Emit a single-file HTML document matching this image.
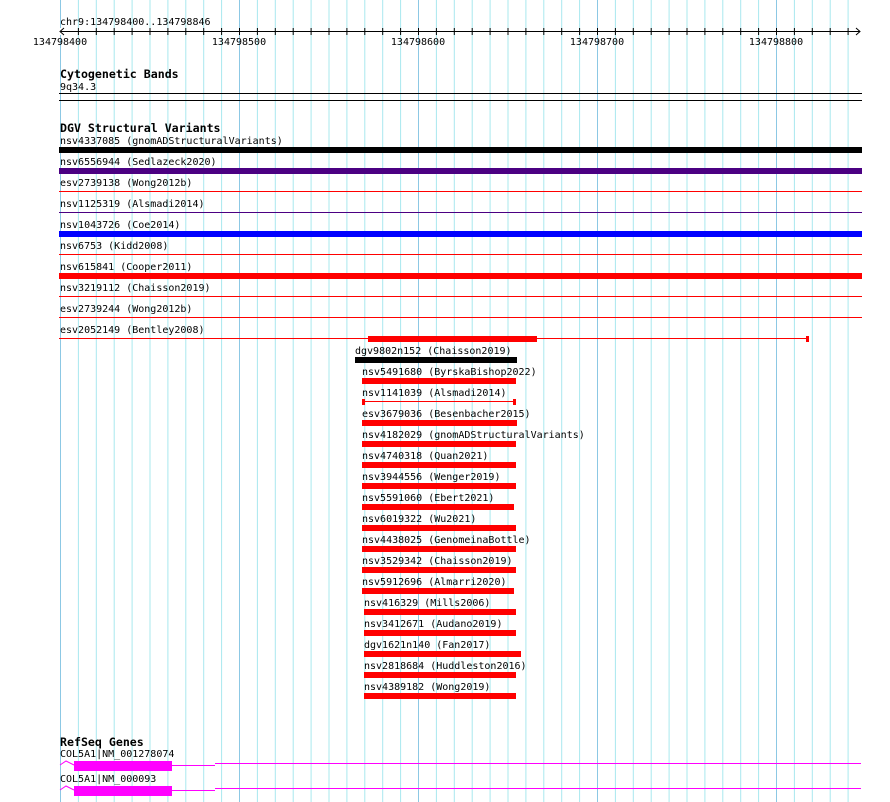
<!DOCTYPE html>
<html><head><meta charset="utf-8"><style>
html,body{margin:0;padding:0;background:#fff;width:890px;height:802px;overflow:hidden}
svg{display:block}
text{font-family:"DejaVu Sans Mono","Liberation Mono",monospace;font-size:10px;fill:#000}
.t{font-weight:bold;font-size:11.6px}
</style></head><body>
<svg width="890" height="802" viewBox="0 0 890 802" shape-rendering="crispEdges">
<defs>
<pattern id="g" x="60" y="0" width="17.9" height="802" patternUnits="userSpaceOnUse">
<rect x="0" y="0" width="1" height="802" fill="#a8e8ee"/>
</pattern>
<pattern id="tk" x="60" y="28" width="17.9" height="7" patternUnits="userSpaceOnUse">
<rect x="0" y="0" width="1" height="7" fill="#000"/>
</pattern>
</defs>
<rect x="0" y="0" width="890" height="802" fill="#fff"/>
<rect x="60" y="0" width="800" height="802" fill="url(#g)"/>
<g fill="#8cc8e4">
<rect x="60" y="0" width="1" height="802"/><rect x="239" y="0" width="1" height="802"/><rect x="418" y="0" width="1" height="802"/><rect x="597" y="0" width="1" height="802"/><rect x="776" y="0" width="1" height="802"/>
</g>
<text x="60" y="25">chr9:134798400..134798846</text>
<rect x="60" y="31" width="800" height="1" fill="#000"/>
<rect x="61" y="28" width="800" height="7" fill="url(#tk)"/>
<rect x="60" y="28" width="1" height="7" fill="#fff"/>
<path d="M64 28 L60 31.5 L64 35 M856 28 L860 31.5 L856 35" stroke="#000" fill="none" stroke-width="1" shape-rendering="auto"/>
<text x="60" y="45" text-anchor="middle">134798400</text>
<text x="239" y="45" text-anchor="middle">134798500</text>
<text x="418" y="45" text-anchor="middle">134798600</text>
<text x="597" y="45" text-anchor="middle">134798700</text>
<text x="776" y="45" text-anchor="middle">134798800</text>
<text class="t" x="60" y="78">Cytogenetic Bands</text>
<text x="60" y="90">9q34.3</text>
<rect x="59" y="93" width="803" height="1" fill="#000"/>
<rect x="59" y="100" width="803" height="1" fill="#000"/>
<text class="t" x="60" y="132">DGV Structural Variants</text>
<text x="60" y="144">nsv4337085 (gnomADStructuralVariants)</text>
<rect x="59" y="147" width="803" height="6" fill="#000"/>
<text x="60" y="165">nsv6556944 (Sedlazeck2020)</text>
<rect x="59" y="168" width="803" height="6" fill="#4b0082"/>
<text x="60" y="186">esv2739138 (Wong2012b)</text>
<rect x="59" y="191" width="803" height="1" fill="#f00"/>
<text x="60" y="207">nsv1125319 (Alsmadi2014)</text>
<rect x="59" y="212" width="803" height="1" fill="#4b0082"/>
<text x="60" y="228">nsv1043726 (Coe2014)</text>
<rect x="59" y="231" width="803" height="6" fill="#00f"/>
<text x="60" y="249">nsv6753 (Kidd2008)</text>
<rect x="59" y="254" width="803" height="1" fill="#f00"/>
<text x="60" y="270">nsv615841 (Cooper2011)</text>
<rect x="59" y="273" width="803" height="6" fill="#f00"/>
<text x="60" y="291">nsv3219112 (Chaisson2019)</text>
<rect x="59" y="296" width="803" height="1" fill="#f00"/>
<text x="60" y="312">esv2739244 (Wong2012b)</text>
<rect x="59" y="317" width="803" height="1" fill="#f00"/>
<text x="60" y="333">esv2052149 (Bentley2008)</text>
<rect x="59" y="338" width="749" height="1" fill="#f00"/>
<rect x="368" y="336" width="169" height="6" fill="#f00"/>
<rect x="806" y="336" width="3" height="6" fill="#f00"/>
<text x="355" y="354">dgv9802n152 (Chaisson2019)</text>
<rect x="355" y="357" width="162" height="6" fill="#000"/>
<g fill="#f00">
<rect x="362" y="378" width="154" height="6"/>
<rect x="362" y="401" width="153" height="1"/><rect x="362" y="399" width="3" height="6"/><rect x="513" y="399" width="3" height="6"/>
<rect x="362" y="420" width="155" height="6"/>
<rect x="362" y="441" width="154" height="6"/>
<rect x="362" y="462" width="154" height="6"/>
<rect x="362" y="483" width="154" height="6"/>
<rect x="362" y="504" width="152" height="6"/>
<rect x="362" y="525" width="154" height="6"/>
<rect x="362" y="546" width="154" height="6"/>
<rect x="362" y="567" width="154" height="6"/>
<rect x="362" y="588" width="152" height="6"/>
<rect x="364" y="609" width="152" height="6"/>
<rect x="364" y="630" width="152" height="6"/>
<rect x="364" y="651" width="157" height="6"/>
<rect x="364" y="672" width="152" height="6"/>
<rect x="364" y="693" width="152" height="6"/>
</g>
<text x="362" y="375">nsv5491680 (ByrskaBishop2022)</text>
<text x="362" y="396">nsv1141039 (Alsmadi2014)</text>
<text x="362" y="417">esv3679036 (Besenbacher2015)</text>
<text x="362" y="438">nsv4182029 (gnomADStructuralVariants)</text>
<text x="362" y="459">nsv4740318 (Quan2021)</text>
<text x="362" y="480">nsv3944556 (Wenger2019)</text>
<text x="362" y="501">nsv5591060 (Ebert2021)</text>
<text x="362" y="522">nsv6019322 (Wu2021)</text>
<text x="362" y="543">nsv4438025 (GenomeinaBottle)</text>
<text x="362" y="564">nsv3529342 (Chaisson2019)</text>
<text x="362" y="585">nsv5912696 (Almarri2020)</text>
<text x="364" y="606">nsv416329 (Mills2006)</text>
<text x="364" y="627">nsv3412671 (Audano2019)</text>
<text x="364" y="648">dgv1621n140 (Fan2017)</text>
<text x="364" y="669">nsv2818684 (Huddleston2016)</text>
<text x="364" y="690">nsv4389182 (Wong2019)</text>
<text class="t" x="60" y="746">RefSeq Genes</text>
<text x="60" y="757">COL5A1|NM_001278074</text>
<path d="M60 765 L66 761 L74 765" stroke="#f0f" fill="none" shape-rendering="auto"/>
<rect x="74" y="761" width="98" height="10" fill="#f0f"/>
<rect x="172" y="765" width="43" height="1" fill="#f0f"/>
<rect x="215" y="763" width="646" height="1" fill="#f0f"/>
<text x="60" y="782">COL5A1|NM_000093</text>
<path d="M60 790 L66 786 L74 790" stroke="#f0f" fill="none" shape-rendering="auto"/>
<rect x="74" y="786" width="98" height="10" fill="#f0f"/>
<rect x="172" y="790" width="43" height="1" fill="#f0f"/>
<rect x="215" y="788" width="646" height="1" fill="#f0f"/>
</svg>
</body></html>
